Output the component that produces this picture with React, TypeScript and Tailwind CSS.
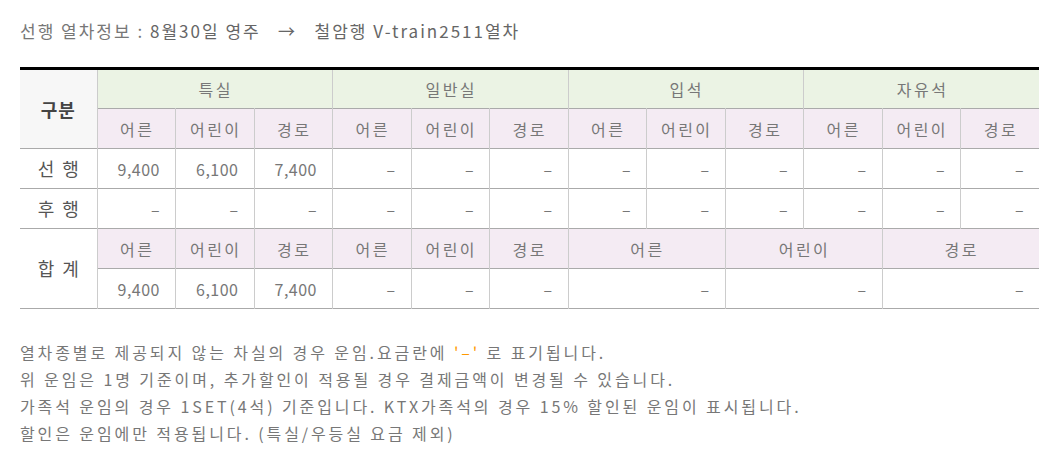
import React from "react";

const F = { fontFamily: '"Noto Sans CJK KR", "Noto Sans", sans-serif' };

const sub = ["어른", "어린이", "경로"];
const groups = ["특실", "일반실", "입석", "자유석"];
const D = "–";

export default function App() {
  const vb = "border-r border-[#cccccc] last:border-r-0";
  const num = `${vb} text-right pr-[15px] h-[40px] text-[16px] text-[#777] tracking-[0.5px]`;
  const hd = `${vb} text-center tracking-[2.5px] pl-[2px]`;
  return (
    <div className="w-[1059px] h-[457px] bg-white px-[20px] pt-[17px]" style={F}>
      <div className="text-[17px] leading-[28px] text-[#777] tracking-[2px] whitespace-pre">
        선행 열차정보 : <span className="text-[#666]">8월30일 영주   →   철암행 V-train2511열차</span>
      </div>
      <table className="mt-[22px] w-[1019px] table-fixed border-collapse border-t-[3px] border-black text-[16px] text-[#777]">
        <colgroup>
          <col className="w-[77px]" />
          {Array.from({ length: 12 }).map((_, i) => (
            <col key={i} className="w-[78.5px]" />
          ))}
        </colgroup>
        <tbody>
          <tr className="border-b border-[#aaaaaa] h-[40px] bg-[#ebf3e4]">
            <td rowSpan={2} className="bg-[#f7f7f7] border-r border-[#cccccc] text-center text-[18px] font-bold text-[#444] tracking-[1px]">
              구분
            </td>
            {groups.map((g) => (
              <td key={g} colSpan={3} className={hd}>
                {g}
              </td>
            ))}
          </tr>
          <tr className="border-b border-[#aaaaaa] h-[40px] bg-[#f4ebf3]">
            {groups.flatMap((g) =>
              sub.map((s) => (
                <td key={g + s} className={hd}>
                  {s}
                </td>
              ))
            )}
          </tr>
          <tr className="border-b border-[#aaaaaa]">
            <td className="border-r border-[#cccccc] text-center text-[18px] text-[#555] tracking-[8px] pl-[8px]">선행</td>
            <td className={num}>9,400</td>
            <td className={num}>6,100</td>
            <td className={num}>7,400</td>
            {Array.from({ length: 9 }).map((_, i) => (
              <td key={i} className={num}>{D}</td>
            ))}
          </tr>
          <tr className="border-b border-[#aaaaaa]">
            <td className="border-r border-[#cccccc] text-center text-[18px] text-[#555] tracking-[8px] pl-[8px]">후행</td>
            {Array.from({ length: 12 }).map((_, i) => (
              <td key={i} className={num}>{D}</td>
            ))}
          </tr>
          <tr className="border-b border-[#aaaaaa] h-[40px]">
            <td rowSpan={2} className="border-r border-[#cccccc] text-center text-[18px] text-[#555] tracking-[8px] pl-[8px] bg-white">
              합계
            </td>
            {[...sub, ...sub].map((s, i) => (
              <td key={i} className={`${hd} bg-[#f4ebf3]`}>{s}</td>
            ))}
            {sub.map((s) => (
              <td key={"m" + s} colSpan={2} className={`${hd} bg-[#f4ebf3]`}>{s}</td>
            ))}
          </tr>
          <tr className="border-b border-[#aaaaaa]">
            <td className={num}>9,400</td>
            <td className={num}>6,100</td>
            <td className={num}>7,400</td>
            <td className={num}>{D}</td>
            <td className={num}>{D}</td>
            <td className={num}>{D}</td>
            <td colSpan={2} className={num}>{D}</td>
            <td colSpan={2} className={num}>{D}</td>
            <td colSpan={2} className={num}>{D}</td>
          </tr>
        </tbody>
      </table>
      <div className="mt-[30px] text-[16px] leading-[27px] text-[#777] tracking-[2.9px]">
        <div>
          열차종별로 제공되지 않는 차실의 경우 운임.요금란에 <span className="text-[#ff9900]">'{D}'</span> 로 표기됩니다.
        </div>
        <div>위 운임은 1명 기준이며, 추가할인이 적용될 경우 결제금액이 변경될 수 있습니다.</div>
        <div>가족석 운임의 경우 1SET(4석) 기준입니다. KTX가족석의 경우 15% 할인된 운임이 표시됩니다.</div>
        <div>할인은 운임에만 적용됩니다. (특실/우등실 요금 제외)</div>
      </div>
    </div>
  );
}
